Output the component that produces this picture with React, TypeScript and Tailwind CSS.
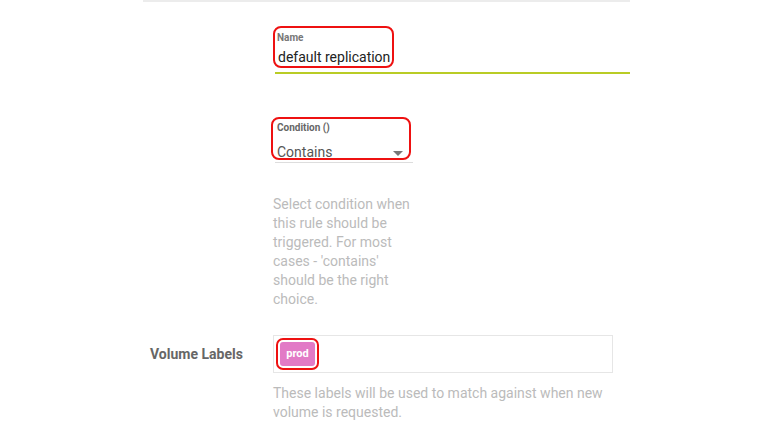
export default function App() {
  return (
    <div className="h-[435px] w-[760px] overflow-hidden bg-white font-['Roboto','Liberation_Sans',sans-serif]">
      <div className="ml-[143px] w-[487px]">
        <div className="h-[2px] bg-[#ececec]" />

        <div className="mt-[24px] pl-[130px]">
          <div className="inline-block rounded-[8px] border-2 border-[#ee1111] px-[2px] pt-[4px] pb-px">
            <div className="text-[10px] font-bold leading-[12px] text-[#777]">Name</div>
            <div className="mt-[5px] pl-px text-[14px] leading-[16px] text-[#222]">default replication</div>
          </div>
          <div className="ml-[2px] mt-[3px] h-[2px] bg-[#b9cc25]" />
        </div>

        <div className="mt-[43px] pl-[128px]">
          <div className="flex h-[43px] w-[140px] flex-col rounded-[8px] border-2 border-[#ee1111] pl-[4px] pr-[6px] pt-[3px]">
            <div className="text-[10px] font-bold leading-[12px] text-[#666]">Condition ()</div>
            <div className="mt-[10px] flex items-center justify-between">
              <span className="text-[14px] leading-[16px] text-[#555]">Contains</span>
              <span className="mt-[3px] h-0 w-0 border-x-[5px] border-t-[5px] border-x-transparent border-t-[#777]" />
            </div>
          </div>
          <div className="ml-[4px] mt-[2px] h-px w-[138px] bg-[#dddddd]" />
          <p className="mt-[32px] ml-[2px] w-[142px] text-[14px] leading-[19px] text-[#bbbbbb]">
            Select condition when this rule should be triggered. For most cases - 'contains' should be the right choice.
          </p>
        </div>

        <div className="mt-[26px] flex items-start">
          <div className="flex h-[38px] w-[130px] items-center pl-[7px] text-[14px] font-bold text-[#666]">Volume Labels</div>
          <div className="flex-1">
            <div className="flex h-[38px] w-[340px] items-center border border-[#e6e6e6] pl-[2px]">
              <div className="rounded-[7px] border-2 border-[#ee1111] p-[2px]">
                <div className="flex h-[24px] w-[35px] items-center justify-center rounded-[3px] bg-[#e27ac6] text-[11px] font-bold text-white">
                  prod
                </div>
              </div>
            </div>
            <p className="mt-[11px] w-[340px] text-[14px] leading-[19px] text-[#bbbbbb]">
              These labels will be used to match against when new volume is requested.
            </p>
          </div>
        </div>
      </div>
    </div>
  )
}
